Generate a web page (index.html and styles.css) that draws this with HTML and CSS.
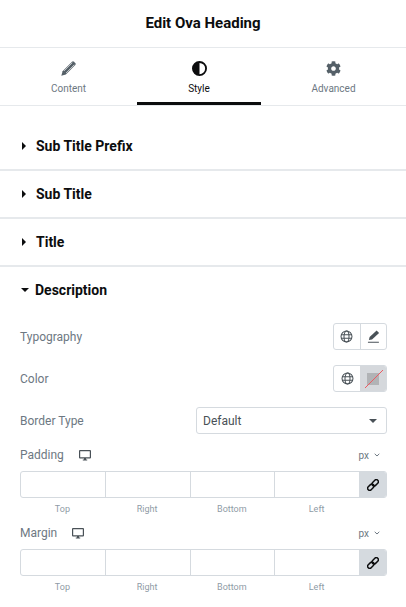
FILE: index.html
```html
<!DOCTYPE html>
<html>

<head>
    <title>Edit Ova Heading</title>
    <link rel="stylesheet" href="styles.css">
</head>

<body>
    <h1 class="panel-title">Edit Ova Heading</h1>

    <div class="tabs">
        <div class="tab">
            <svg class="tab-icon" viewBox="0 0 14 14"><path d="M10.300.700a1.300 1.300 0 0 1 1.800 0l1.200 1.200a1.300 1.300 0 0 1 0 1.800L4.500 12.500.3 13.700l1.200-4.200z"/><path d="M2.800 9.300l7.700-7.700M4.700 11.200l7.700-7.700" stroke="#fff" stroke-width=".6" fill="none"/></svg>
            <span>Content</span>
        </div>
        <div class="tab active">
            <svg class="tab-icon" viewBox="0 0 16 16"><path d="M8 0a8 8 0 1 0 0 16A8 8 0 0 0 8 0zm0 2a6 6 0 0 1 0 12z" fill-rule="evenodd"/></svg>
            <span>Style</span>
        </div>
        <div class="tab">
            <svg class="tab-icon" viewBox="0 0 512 512"><path d="M487.4 315.700l-42.600-24.600c4.300-23.200 4.300-47 0-70.200l42.600-24.600c4.900-2.800 7.100-8.600 5.500-14-11.100-35.600-30-67.800-54.700-94.600-3.800-4.100-10-5.100-14.800-2.300L380.800 110c-17.900-15.400-38.500-27.300-60.800-35.100V25.800c0-5.600-3.900-10.500-9.400-11.700-36.700-8.200-74.300-7.800-109.200 0-5.500 1.200-9.400 6.100-9.400 11.700V75c-22.200 7.900-42.800 19.800-60.800 35.100L88.700 85.500c-4.900-2.800-11-1.900-14.800 2.300-24.700 26.700-43.600 58.900-54.700 94.600-1.700 5.400.6 11.200 5.500 14L67.300 221c-4.300 23.200-4.300 47 0 70.200l-42.600 24.600c-4.900 2.800-7.100 8.600-5.500 14 11.100 35.600 30 67.800 54.700 94.600 3.800 4.100 10 5.100 14.800 2.300l42.600-24.600c17.900 15.400 38.500 27.300 60.800 35.100v49.200c0 5.600 3.900 10.500 9.400 11.700 36.700 8.200 74.300 7.800 109.200 0 5.500-1.200 9.400-6.100 9.400-11.700v-49.200c22.200-7.900 42.800-19.800 60.800-35.100l42.600 24.600c4.900 2.800 11 1.900 14.800-2.300 24.700-26.700 43.600-58.900 54.700-94.600 1.500-5.500-.7-11.300-5.600-14.100zM256 336c-44.100 0-80-35.900-80-80s35.900-80 80-80 80 35.900 80 80-35.900 80-80 80z"/></svg>
            <span>Advanced</span>
        </div>
    </div>

    <div class="section">
        <span class="caret"></span>
        <span class="section-title">Sub Title Prefix</span>
    </div>
    <div class="section">
        <span class="caret"></span>
        <span class="section-title">Sub Title</span>
    </div>
    <div class="section">
        <span class="caret"></span>
        <span class="section-title">Title</span>
    </div>
    <div class="section open">
        <span class="caret"></span>
        <span class="section-title">Description</span>
    </div>

    <div class="controls">
        <div class="control typography-row">
            <span class="control-label">Typography</span>
            <div class="btn-group">
                <div class="btn">
                    <svg class="globe" viewBox="0 0 14 14"><g fill="none" stroke="#495157" stroke-width="1.100"><circle cx="7" cy="7" r="5.900"/><ellipse cx="7" cy="7" rx="2.700" ry="5.900"/><path d="M1.200 5h11.600M1.200 9h11.600"/></g></svg>
                </div>
                <div class="btn">
                    <svg class="pen" viewBox="0 0 14 14"><path fill="#495157" d="M10.400.6l2.600 2.600-7.600 7-3.400.7.800-3.300z"/><path fill="none" stroke="#495157" stroke-width="1.100" d="M1 13.300h11.800"/></svg>
                </div>
            </div>
        </div>

        <div class="control color-row">
            <span class="control-label">Color</span>
            <div class="btn-group">
                <div class="btn">
                    <svg class="globe" viewBox="0 0 14 14"><g fill="none" stroke="#495157" stroke-width="1.100"><circle cx="7" cy="7" r="5.900"/><ellipse cx="7" cy="7" rx="2.700" ry="5.900"/><path d="M1.200 5h11.600M1.200 9h11.600"/></g></svg>
                </div>
                <div class="btn swatch">
                    <svg class="no-color" viewBox="0 0 26 26"><rect x="7" y="7" width="12" height="12" fill="#b1b3b6"/><path d="M5 22L23 4" stroke="#ec5b62" stroke-width="1"/></svg>
                </div>
            </div>
        </div>

        <div class="control border-row">
            <span class="control-label">Border Type</span>
            <div class="select">
                <span>Default</span>
                <span class="select-arrow"></span>
            </div>
        </div>

        <div class="dimensions">
            <div class="dim-head">
                <span class="control-label">Padding</span>
                <svg class="monitor" viewBox="0 0 12 11"><path fill="#495157" d="M1 0h10a1 1 0 0 1 1 1v6.500a1 1 0 0 1-1 1H7v1h1.200v1H3.800v-1H5v-1H1a1 1 0 0 1-1-1V1a1 1 0 0 1 1-1zm.2 1.200v6h9.600v-6z" fill-rule="evenodd"/></svg>
                <span class="unit">px</span>
                <svg class="unit-arrow" viewBox="0 0 6 4"><path d="M.7.8L3 3l2.300-2.200" fill="none" stroke="#6d7882" stroke-width="1"/></svg>
            </div>
            <div class="dim-inputs">
                <div class="dim-cell"></div>
                <div class="dim-cell"></div>
                <div class="dim-cell"></div>
                <div class="dim-cell"></div>
                <div class="dim-link">
                    <svg class="link" viewBox="0 0 14 14"><g fill="none" stroke="#0c0d0e" stroke-width="1.700" transform="rotate(-45 7 7)"><rect x="-.8" y="4.600" width="8.400" height="4.800" rx="2.400"/><rect x="6.400" y="4.600" width="8.400" height="4.800" rx="2.400"/></g></svg>
                </div>
            </div>
            <div class="dim-labels">
                <span>Top</span>
                <span>Right</span>
                <span>Bottom</span>
                <span>Left</span>
                <span class="dim-spacer"></span>
            </div>
        </div>

        <div class="dimensions">
            <div class="dim-head">
                <span class="control-label">Margin</span>
                <svg class="monitor" viewBox="0 0 12 11"><path fill="#495157" d="M1 0h10a1 1 0 0 1 1 1v6.500a1 1 0 0 1-1 1H7v1h1.200v1H3.800v-1H5v-1H1a1 1 0 0 1-1-1V1a1 1 0 0 1 1-1zm.2 1.200v6h9.600v-6z" fill-rule="evenodd"/></svg>
                <span class="unit">px</span>
                <svg class="unit-arrow" viewBox="0 0 6 4"><path d="M.7.8L3 3l2.300-2.200" fill="none" stroke="#6d7882" stroke-width="1"/></svg>
            </div>
            <div class="dim-inputs">
                <div class="dim-cell"></div>
                <div class="dim-cell"></div>
                <div class="dim-cell"></div>
                <div class="dim-cell"></div>
                <div class="dim-link">
                    <svg class="link" viewBox="0 0 14 14"><g fill="none" stroke="#0c0d0e" stroke-width="1.700" transform="rotate(-45 7 7)"><rect x="-.8" y="4.600" width="8.400" height="4.800" rx="2.400"/><rect x="6.400" y="4.600" width="8.400" height="4.800" rx="2.400"/></g></svg>
                </div>
            </div>
            <div class="dim-labels">
                <span>Top</span>
                <span>Right</span>
                <span>Bottom</span>
                <span>Left</span>
                <span class="dim-spacer"></span>
            </div>
        </div>
    </div>
</body>

</html>
```

FILE: styles.css
```css
html,
body {
    height: 100%;
    overflow: hidden;
}

body {
    font-family: Roboto, "Liberation Sans", sans-serif;
    margin: 0;
    background-color: #fff;
    color: #0c0d0e;
}

.panel-title {
    height: 47px;
    margin: 0;
    border-bottom: 1px solid #e6e9ec;
    font-size: 15px;
    font-weight: 700;
    line-height: 46px;
    text-align: center;
}

.tabs {
    display: grid;
    grid-template-columns: 137px 124px 1fr;
    height: 57px;
    border-bottom: 1px solid #e6e9ec;
}

.tab {
    display: flex;
    flex-direction: column;
    align-items: center;
    height: 57px;
    box-sizing: border-box;
    padding-top: 13px;
    color: #6d7882;
    font-size: 10px;
}

.tab span {
    margin-top: 6px;
    line-height: 13px;
}

.tab-icon {
    width: 15px;
    height: 15px;
    fill: #556068;
}

.tab.active {
    color: #0c0d0e;
    border-bottom: 3px solid #0c0d0e;
}

.tab.active .tab-icon {
    fill: #0c0d0e;
}

.section {
    display: flex;
    align-items: center;
    height: 46px;
    padding-left: 20px;
    border-bottom: 2px solid #e6e9ec;
}

.tabs + .section {
    margin-top: 17px;
}

.section.open {
    border-bottom: none;
}

.caret {
    width: 0;
    height: 0;
    margin: 0 10px 0 2px;
    border-top: 4px solid transparent;
    border-bottom: 4px solid transparent;
    border-left: 4px solid #0c0d0e;
}

.section.open .caret {
    margin: 0 6px 0 1px;
    border-top: 4px solid #0c0d0e;
    border-bottom: none;
    border-left: 4px solid transparent;
    border-right: 4px solid transparent;
}

.section-title {
    font-size: 14px;
    font-weight: 700;
}

.controls {
    padding: 0 19px 0 20px;
}

.control {
    display: flex;
    align-items: center;
    justify-content: space-between;
    height: 27px;
}

.typography-row {
    margin-top: 10px;
}

.color-row {
    margin-top: 15px;
}

.border-row {
    margin-top: 15px;
}

.control-label {
    color: #6d7882;
    font-size: 12px;
}

.btn-group {
    display: flex;
    width: 54px;
    height: 27px;
    box-sizing: border-box;
    border: 1px solid #d5dadf;
    border-radius: 3px;
    overflow: hidden;
}

.btn {
    display: flex;
    align-items: center;
    justify-content: center;
    flex: 1;
}

.btn + .btn {
    border-left: 1px solid #d5dadf;
}

.btn.swatch {
    background-color: #d5d8dc;
    border-left: none;
}

.globe,
.pen {
    width: 13px;
    height: 13px;
}

.no-color {
    width: 26px;
    height: 26px;
}

.select {
    display: flex;
    align-items: center;
    justify-content: space-between;
    width: 191px;
    height: 27px;
    box-sizing: border-box;
    padding: 0 9px 0 6px;
    border: 1px solid #d5dadf;
    border-radius: 3px;
    color: #495157;
    font-size: 12px;
}

.select-arrow {
    width: 0;
    height: 0;
    border-top: 4px solid #495157;
    border-left: 4px solid transparent;
    border-right: 4px solid transparent;
}

.dim-head {
    display: flex;
    align-items: center;
    height: 14px;
}

.dimensions {
    margin-top: 14px;
}

.dimensions + .dimensions {
    margin-top: 11px;
}

.monitor {
    width: 12px;
    height: 11px;
    margin-left: 15px;
}

.unit {
    margin-left: auto;
    color: #6d7882;
    font-size: 10px;
}

.unit-arrow {
    width: 6px;
    height: 4px;
    margin: 0 7px 0 5px;
}

.dim-inputs {
    display: flex;
    height: 27px;
    margin-top: 9px;
    box-sizing: border-box;
    border: 1px solid #d5dadf;
    border-radius: 3px;
    overflow: hidden;
}

.dim-cell {
    flex: 1;
    border-right: 1px solid #d5dadf;
}

.dim-cell:nth-child(4) {
    border-right: none;
}

.dim-link {
    display: flex;
    align-items: center;
    justify-content: center;
    width: 27px;
    background-color: #d5dadf;
}

.link {
    width: 12px;
    height: 12px;
}

.dim-labels {
    display: flex;
    margin-top: 5px;
    color: #8f9ba6;
    font-size: 9px;
    line-height: 12px;
}

.dim-labels span {
    flex: 1;
    text-align: center;
}

.dim-labels .dim-spacer {
    flex: none;
    width: 28px;
}
```
